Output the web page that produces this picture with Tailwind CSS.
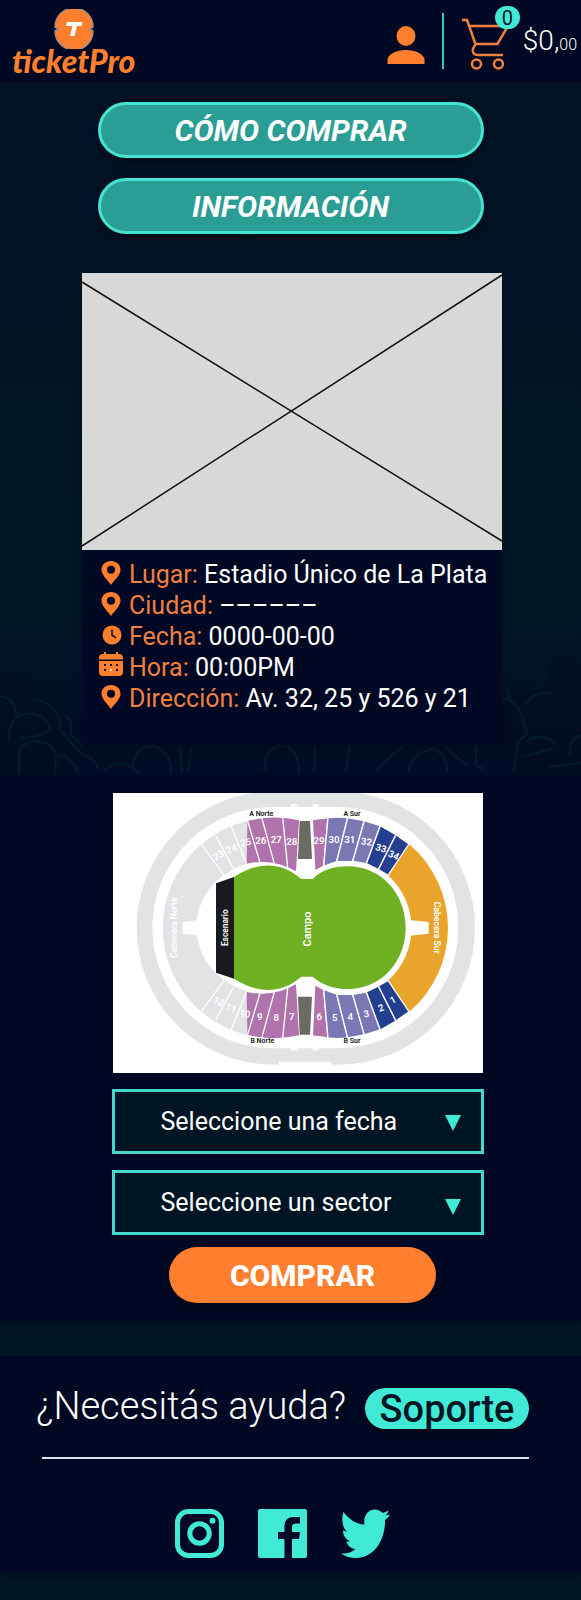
<!DOCTYPE html>
<html lang="es">
<head>
<meta charset="utf-8">
<meta name="viewport" content="width=device-width, initial-scale=1">
<title>ticketPro</title>
<script src="https://cdn.jsdelivr.net/npm/@tailwindcss/browser@4"></script>
</head>
<body class="min-h-screen bg-[#001524] font-[Roboto,'Liberation_Sans',sans-serif] text-white">

<header class="flex h-[82px] items-center justify-between bg-[#000823] pr-1 pl-3">
  <a href="#" aria-label="ticketPro" class="flex flex-col items-center text-[#ff7f2e]">
    <svg class="h-10 w-10" viewBox="0 0 40 40" aria-hidden="true">
      <path d="M1 18A19 19 0 0 1 39 18L35.500 20L39 22A19 19 0 0 1 1 22L4.500 20Z" fill="#ff7f2e" stroke="#a08d84" stroke-width="1.500"/>
      <path d="M13 13H28.500L27.500 17H23L20.500 27H16L18.500 17H12Z" fill="#fff"/>
    </svg>
    <span class="font-[Lato,sans-serif] text-[32px] leading-6 font-black italic">ticketPro</span>
  </a>
  <div class="flex items-center">
    <button type="button" aria-label="Mi cuenta" class="mt-2">
      <svg class="h-10 w-10" viewBox="0 0 40 40" fill="#ff7f2e" aria-hidden="true"><ellipse cx="20" cy="11" rx="9.500" ry="10"/><path d="M1.500 39V35C1.500 29 11 25 20 25S38.500 29 38.500 35V39Z"/></svg>
    </button>
    <div class="mx-4 h-14 w-0.5 bg-[#35c9bd]"></div>
    <button type="button" aria-label="Carrito, 0 productos" class="relative ml-px flex items-center">
      <svg class="mt-[6px] h-[52px] w-12" viewBox="0 0 48 52" fill="none" stroke="#ee8040" stroke-width="2.500" aria-hidden="true">
        <path d="M1 2H6L14.500 26H36.500L47 8H8M14.500 26L12 31Q11 37 17 37H42"/><circle cx="15.500" cy="46" r="4.500"/><circle cx="37.500" cy="46" r="4.500"/>
      </svg>
      <span class="absolute -top-[6px] left-[34px] flex h-[23px] w-[25px] items-center justify-center rounded-full bg-[#40ead6] text-xl leading-none text-[#001524]">0</span>
    </button>
    <p class="ml-[14px] text-[28px] leading-8 font-light">$0,<span class="text-base">00</span></p>
  </div>
</header>

<main>
  <section class="relative overflow-hidden bg-linear-to-b from-[#001224] from-15% to-[#001725] to-75% pt-5 pb-[30px]">
    <svg class="absolute inset-x-0 bottom-0 h-[180px] w-full" viewBox="0 0 581 180" preserveAspectRatio="none" aria-hidden="true">
      <defs><linearGradient id="haze" x1="0" y1="0" x2="0" y2="1"><stop offset="0" stop-color="#000c25" stop-opacity="0"/><stop offset="1" stop-color="#000b25"/></linearGradient></defs>
      <rect width="581" height="180" fill="url(#haze)"/>
      <path d="M0 78Q10 70 18 82L26 76Q34 90 38 104Q60 108 70 120L82 128V180H0ZM502 180V100Q516 84 523 104L530 98Q546 94 551 82Q544 68 557 64Q568 54 576 66L581 70V180Z" fill="#000b25" fill-opacity=".6"/>
      <g fill="none" stroke="#021d2c" stroke-width="2">
        <path d="M0 101Q15 102 16 121M9 147Q8 120 26 119Q42 116 51 134Q46 141 20 143M19 180V159Q20 147 37 146Q56 148 56 165L54 180M33 104Q60 108 60 135L80 158Q94 162 98 174M57 160Q72 160 78 178M66 120Q72 123 71 140L84 152M104 176Q120 160 138 178M133 176Q132 152 152 151Q171 154 171 178M180 150L182 178M192 149L188 176M264 176Q264 153 283 150Q299 154 299 178M315 152L314 178M350 150L346 176M375 176L404 150M408 176Q412 158 432 154Q448 158 447 178M438 145L466 170M476 148V171L484 174M501 104Q516 102 523 124L527 139L518 146L514 176M527 146Q540 136 557 150M521 162L552 154M570 160Q568 144 581 140M550 172L581 168M507 92L511 108M524 109Q534 96 551 98"/>
      </g>
    </svg>

    <div class="relative flex flex-col items-center">
      <nav class="flex w-full max-w-[386px] flex-col gap-5">
        <a href="#" class="flex h-14 items-center justify-center rounded-full border-[3px] border-[#45e3d2] bg-[#2a9d94] text-[30px] font-bold italic shadow-[0_4px_8px_rgba(0,0,0,0.35)]">CÓMO COMPRAR</a>
        <a href="#" class="flex h-14 items-center justify-center rounded-full border-[3px] border-[#45e3d2] bg-[#2a9d94] text-[30px] font-bold italic shadow-[0_4px_8px_rgba(0,0,0,0.35)]">INFORMACIÓN</a>
      </nav>

      <article class="mt-[39px] ml-[3px] w-full max-w-[420px] bg-[#000823] pb-[31px] shadow-[0_4px_8px_rgba(0,0,0,0.25)]">
        <svg class="block h-auto w-full bg-[#d8d8d8]" viewBox="0 0 420 277" role="img" aria-label="Imagen del evento"><path d="M0 9L420 268M0 273L420 2" stroke="#111" stroke-width="1.500"/></svg>
        <ul class="pt-[9px] pl-[17px] text-[25px] leading-[31px] whitespace-nowrap">
          <li class="flex items-start gap-[6px]"><svg class="mt-0.5 h-6 w-6 shrink-0" viewBox="0 0 24 24" aria-hidden="true"><path fill="#ff7f2e" fill-rule="evenodd" d="M12 0C6.500 0 2.500 3.800 2.500 8.800C2.500 14 8.500 19 12 24C15.500 19 21.500 14 21.500 8.800C21.500 3.800 17.500 0 12 0ZM12 4.800A4 4 0 1 1 12 12.800A4 4 0 1 1 12 4.800Z"/></svg><p><span class="text-[#ee8040]">Lugar:</span> Estadio Único de La Plata</p></li>
          <li class="flex items-start gap-[6px]"><svg class="mt-0.5 h-6 w-6 shrink-0" viewBox="0 0 24 24" aria-hidden="true"><path fill="#ff7f2e" fill-rule="evenodd" d="M12 0C6.500 0 2.500 3.800 2.500 8.800C2.500 14 8.500 19 12 24C15.500 19 21.500 14 21.500 8.800C21.500 3.800 17.500 0 12 0ZM12 4.800A4 4 0 1 1 12 12.800A4 4 0 1 1 12 4.800Z"/></svg><p><span class="text-[#ee8040]">Ciudad:</span> ––––––</p></li>
          <li class="flex items-start gap-[6px]"><svg class="mt-0.5 h-6 w-6 shrink-0" viewBox="0 0 24 24" aria-hidden="true"><circle cx="13" cy="12" r="9.500" fill="#ff7f2e"/><path d="M13 6.500V12L17 15" fill="none" stroke="#000823" stroke-width="1.500"/></svg><p><span class="text-[#ee8040]">Fecha:</span> 0000-00-00</p></li>
          <li class="flex items-start gap-[6px]"><svg class="h-6 w-6 shrink-0" viewBox="0 0 24 24" aria-hidden="true"><path fill="#ff7f2e" d="M5 0H7V2H17V0H19V2H20Q24 2 24 6V7.500H0V6Q0 2 4 2H5ZM0 9H24V20Q24 24 20 24H4Q0 24 0 20Z"/><path d="M5 12h2v2H5zM11 12h2v2h-2zM17 12h2v2h-2zM5 17h2v2H5zM17 17h2v2h-2z" fill="#000823"/><path d="M11 17h2v2h-2z" fill="#ffe0cc"/></svg><p><span class="text-[#ee8040]">Hora:</span> 00:00PM</p></li>
          <li class="flex items-start gap-[6px]"><svg class="mt-0.5 h-6 w-6 shrink-0" viewBox="0 0 24 24" aria-hidden="true"><path fill="#ff7f2e" fill-rule="evenodd" d="M12 0C6.500 0 2.500 3.800 2.500 8.800C2.500 14 8.500 19 12 24C15.500 19 21.500 14 21.500 8.800C21.500 3.800 17.500 0 12 0ZM12 4.800A4 4 0 1 1 12 12.800A4 4 0 1 1 12 4.800Z"/></svg><p><span class="text-[#ee8040]">Dirección:</span> Av. 32, 25 y 526 y 21</p></li>
        </ul>
      </article>
    </div>
  </section>

  <section class="bg-[#000823] pt-[18px] pb-[17px] pl-[14px] shadow-[0_4px_8px_rgba(0,0,0,0.3)]">
    <form class="mx-auto flex max-w-[372px] flex-col items-center">
      <svg class="h-auto w-[370px] max-w-full bg-white" viewBox="24 10 1110 840" role="img" aria-label="Mapa del estadio" font-family="Roboto, sans-serif">
        <rect x="95" y="5" width="1015" height="820" rx="410" fill="#e2e3e5"/>
        <rect x="142" y="52" width="918" height="724" rx="362" fill="#fff"/>
        <path d="M522 817H678V826H522ZM558 43H577V62H558ZM623 43H641V62H623ZM558 765H577V783H558ZM623 765H641V783H623Z" fill="#fff"/>
        <path d="M427 94A330 330 0 0 0 427 736L427 605A215 200 0 0 1 427 222Z" fill="#e2e3e5"/>
        <path d="M912 163A330 330 0 0 1 912 667L849 573A212 212 0 0 0 849 257Z" fill="#e9a42b"/>
        <path d="M233 397L290 391V438L233 432ZM971 397L912 391V438L971 432Z" fill="#fff"/>
        <defs>
          <g id="tribuna" stroke="#fff" stroke-width="4">
            <path d="M290 165L357 257M332 137L385 237M378 108L426 226" fill="none"/>
            <path d="M427 94Q505 74 582 92L573 245Q505 205 425 222Z" fill="#b173ab" stroke="none"/>
            <path d="M428 94L465 219M470 83L508 222M533 82L548 234" fill="none"/>
            <path d="M584 94H615L621 208H579Z" fill="#6d6963" stroke="none"/>
            <path d="M622 90L669 84L656 230L629 244Z" fill="#b173ab"/>
            <path d="M669 84Q700 80 728 84L695 216L656 230Z" fill="#7b77b4"/>
            <path d="M728 84L778 93L743 215L695 216Z" fill="#7b77b4"/>
            <path d="M778 93L826 108L784 222L743 215Z" fill="#7b77b4"/>
            <path d="M826 108L873 135L820 240L784 222Z" fill="#253f90"/>
            <path d="M873 135L912 163L849 257L820 240Z" fill="#253f90"/>
          </g>
        </defs>
        <use href="#tribuna"/>
        <use href="#tribuna" transform="matrix(1 0 0 -1 0 829)"/>
        <path d="M387 262Q480 202 560 247Q576 257 589 268H623Q660 230 728 230C830 230 902 314 902 414S830 598 728 598Q665 598 623 561H589Q576 572 560 582Q480 626 387 567Z" fill="#70b023"/>
        <path d="M333 281L387 262V567L333 549Z" fill="#1b1920"/>
        <g fill="#fff" font-size="29" font-weight="600" text-anchor="middle">
          <text transform="translate(345 206) rotate(-28)">23</text><text transform="translate(383 187) rotate(-22)">24</text><text transform="translate(424 168) rotate(-12)">25</text>
          <text x="467" y="162">26</text><text x="514" y="159">27</text><text x="560" y="167">28</text>
          <text x="642" y="164">29</text><text x="687" y="160">30</text><text x="734" y="161">31</text>
          <text transform="translate(783 166) rotate(8)">32</text><text transform="translate(825 185) rotate(18)">33</text><text transform="translate(862 206) rotate(24)">34</text>
          <text transform="translate(336 644) rotate(28)">12</text><text transform="translate(374 665) rotate(22)">11</text><text transform="translate(418 682) rotate(10)">10</text>
          <text x="464" y="691">9</text><text x="514" y="693">8</text><text x="560" y="691">7</text>
          <text x="643" y="691">6</text><text x="689" y="693">5</text><text x="736" y="691">4</text>
          <text transform="translate(786 682) rotate(-10)">3</text><text transform="translate(831 664) rotate(-20)">2</text><text transform="translate(868 640) rotate(-28)">1</text>
          <text transform="translate(369 414) rotate(-90)" font-size="25">Escenario</text>
          <text transform="translate(619 418) rotate(-90)" font-size="33">Campo</text>
          <text transform="translate(216 414) rotate(-90)" font-size="26">Cabecera Norte</text>
          <text transform="translate(986 414) rotate(90)" font-size="26">Cabecera Sur</text>
          <g fill="#111" font-size="21"><text x="469" y="79">A Norte</text><text x="741" y="79">A Sur</text><text x="472" y="761">B Norte</text><text x="741" y="761">B Sur</text></g>
        </g>
      </svg>

      <div class="relative mt-4 w-full">
        <select aria-label="Fecha" class="block h-[65px] w-full appearance-none border-[3px] border-[#45d8ca] bg-[#001524] pr-14 pl-[46px] text-[25px] text-white"><option>Seleccione una fecha</option></select>
        <svg class="pointer-events-none absolute top-[26px] right-[23px] h-4 w-4" viewBox="0 0 16 16" aria-hidden="true"><path d="M0 0H16L8 16Z" fill="#40ead6"/></svg>
      </div>
      <div class="relative mt-4 w-full">
        <select aria-label="Sector" class="block h-[65px] w-full appearance-none border-[3px] border-[#45d8ca] bg-[#001524] pr-14 pl-[46px] text-[25px] text-white"><option>Seleccione un sector</option></select>
        <svg class="pointer-events-none absolute top-[29px] right-[23px] h-4 w-4" viewBox="0 0 16 16" aria-hidden="true"><path d="M0 0H16L8 16Z" fill="#40ead6"/></svg>
      </div>
      <button type="submit" class="mt-3 ml-[10px] h-14 w-[267px] rounded-full bg-[#ff7f2e] text-[30px] font-extrabold shadow-[0_4px_8px_rgba(0,0,0,0.4)]">COMPRAR</button>
    </form>
  </section>
</main>

<footer class="mt-9 bg-[#000823] px-9 pt-8 pb-[14px] shadow-[0_4px_8px_rgba(0,0,0,0.3)]">
  <div class="mr-4 flex items-start justify-between whitespace-nowrap">
    <p class="text-[38px] leading-[36px] font-light">¿Necesitás ayuda?</p>
    <a href="#" class="flex h-[41px] w-[164px] items-center justify-center rounded-full bg-[#40ead6] text-[38px] leading-none font-medium text-[#001524] shadow-[0_4px_8px_rgba(0,0,0,0.35)]">Soporte</a>
  </div>
  <hr class="mt-7 mr-4 ml-[6px] border-t-2 border-[#dfe3e6]">
  <nav class="mt-[50px] mr-4 flex items-center justify-center gap-[34px]" aria-label="Redes sociales">
    <a href="#" aria-label="Instagram"><svg class="h-[49px] w-[49px]" viewBox="0 0 49 49" fill="none" stroke="#40ead6" aria-hidden="true"><rect x="2.500" y="2.500" width="44" height="44" rx="11" stroke-width="5"/><circle cx="24.500" cy="24.500" r="9.700" stroke-width="5"/><circle cx="37.500" cy="11.800" r="3" fill="#40ead6" stroke="none"/></svg></a>
    <a href="#" aria-label="Facebook"><svg class="h-[49px] w-[49px]" viewBox="0 0 49 49" fill="#40ead6" aria-hidden="true"><path d="M2 0H47Q49 0 49 2V47Q49 49 47 49H34V30H41L42 23H34V18Q34 14.500 38 14.500H42V8H36Q26.500 8 26.500 17V23H20V30H26.500V49H2Q0 49 0 47V2Q0 0 2 0Z"/></svg></a>
    <a href="#" aria-label="Twitter"><svg class="h-[49px] w-[49px]" viewBox="0 0 49 49" fill="#40ead6" aria-hidden="true"><path d="M2.500 3C8 10.500 15 15 23.500 15.500C22 7 27 .5 33.500 .5C37 .5 39.500 2 41.500 4C43.500 3.500 45.500 2.500 47.500 1.500C47 3.500 46 5 44.500 6.500L49 5.500C48 7.500 46 9.500 44 11C44.500 31 33 49 15 49C9.500 49 4.500 47.500 0 44.500C5.500 45 10.500 43.500 14.500 40C10 39.500 6.500 37 5.500 32.500H9.500C5 30.500 2 27 2 21.500L6 22.800C1.500 19 0 10 2.500 3Z"/></svg></a>
  </nav>
</footer>

</body>
</html>
